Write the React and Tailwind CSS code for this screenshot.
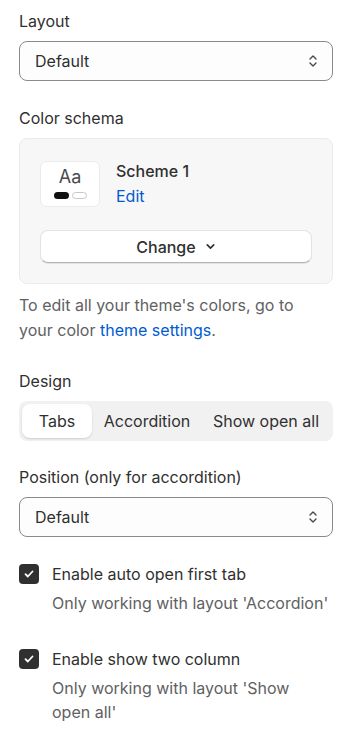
import React, { useState } from "react";

const SelectIcon = () => (
  <svg width="10" height="16" viewBox="0 0 10 16" fill="none" className="text-[#4a4a4a]">
    <path d="M2 6l3-3 3 3" stroke="currentColor" strokeWidth="1.4" strokeLinecap="round" strokeLinejoin="round" />
    <path d="M2 10l3 3 3-3" stroke="currentColor" strokeWidth="1.4" strokeLinecap="round" strokeLinejoin="round" />
  </svg>
);

const Select = ({ value }) => (
  <div className="h-[40px] w-full rounded-lg border border-[#8a8a8a] bg-[#fdfdfd] flex items-center justify-between pl-[15px] pr-[14px]">
    <span className="text-[#303030]">{value}</span>
    <SelectIcon />
  </div>
);

const Checkbox = ({ label, help }) => (
  <div className="flex gap-[13px]">
    <div className="w-[20px] h-[20px] mt-[1px] rounded-[4px] bg-[#303030] flex items-center justify-center shrink-0">
      <svg width="12" height="12" viewBox="0 0 12 12" fill="none">
        <path d="M2.5 6.2l2.3 2.3 4.7-5" stroke="white" strokeWidth="1.8" strokeLinecap="round" strokeLinejoin="round" />
      </svg>
    </div>
    <div className="pr-[3px]">
      <p className="text-[#303030] leading-[22px]">{label}</p>
      <p className="text-[#616161] leading-6 mt-[6px]">{help}</p>
    </div>
  </div>
);

export default function App() {
  const [design, setDesign] = useState("Tabs");

  return (
    <div className="w-[352px] min-h-[740px] bg-white px-[19px] pt-[9px] text-[16px] font-['Inter',sans-serif] text-[#303030]">
      {/* layout */}
      <p className="leading-6 mb-2">Layout</p>
      <Select value="Default" />

      {/* color schema */}
      <p className="leading-6 mt-[25px] mb-2">Color schema</p>
      <div className="rounded-lg border border-[#ebebeb] bg-[#f7f7f7] px-[20px] pt-[22px] pb-[20px]">
        <div className="flex gap-4 h-[46px] items-start">
          <div className="w-[60px] h-[46px] rounded-md border border-[#ebebeb] bg-white flex flex-col items-center pt-[3px]">
            <span className="text-[18px] leading-[24px] text-[#4a4a4a]">Aa</span>
            <div className="flex gap-[3px] mt-[3px]">
              <span className="w-[15px] h-[7px] rounded-full bg-[#111]" />
              <span className="w-[15px] h-[7px] rounded-full border border-[#c8c8c8] bg-white" />
            </div>
          </div>
          <div className="-mt-[2px]">
            <p className="leading-[25px] font-medium">Scheme 1</p>
            <p className="leading-[25px] text-[#005bd3]">Edit</p>
          </div>
        </div>
        <button className="mt-[23px] w-full h-[33px] rounded-lg bg-white border border-[#e3e3e3] border-b-[#b5b5b5] shadow-[0_1px_0_rgba(0,0,0,0.08)] flex items-center justify-center gap-[9px] font-medium text-[#303030]">
          Change
          <svg width="11" height="11" viewBox="0 0 12 12" fill="none">
            <path d="M2.5 4.2L6 7.7l3.5-3.5" stroke="#303030" strokeWidth="1.8" strokeLinecap="round" strokeLinejoin="round" />
          </svg>
        </button>
      </div>
      <p className="mt-[9px] pr-[3px] leading-[25px] text-[#616161]">
        To edit all your theme's colors, go to your color <span className="text-[#005bd3]">theme settings</span>.
      </p>

      {/* design */}
      <p className="leading-6 mt-[26px] mb-2">Design</p>
      <div className="h-[40px] rounded-lg bg-[#f1f1f1] p-[3px] flex">
        {[
          ["Tabs", "w-[70px]"],
          ["Accordition", "w-[110px]"],
          ["Show open all", "w-[128px]"],
        ].map(([item, w]) => (
          <button
            key={item}
            onClick={() => setDesign(item)}
            className={`${w} h-full rounded-lg flex items-center justify-center whitespace-nowrap ${
              design === item ? "bg-white shadow-[0_1px_2px_rgba(0,0,0,0.15)]" : ""
            }`}
          >
            {item}
          </button>
        ))}
      </div>

      {/* position */}
      <p className="leading-6 mt-[24px] mb-2">Position (only for accordition)</p>
      <Select value="Default" />

      <div className="mt-[26px]">
        <Checkbox label="Enable auto open first tab" help="Only working with layout 'Accordion'" />
      </div>
      <div className="mt-[33px]">
        <Checkbox label="Enable show two column" help="Only working with layout 'Show open all'" />
      </div>
    </div>
  );
}
